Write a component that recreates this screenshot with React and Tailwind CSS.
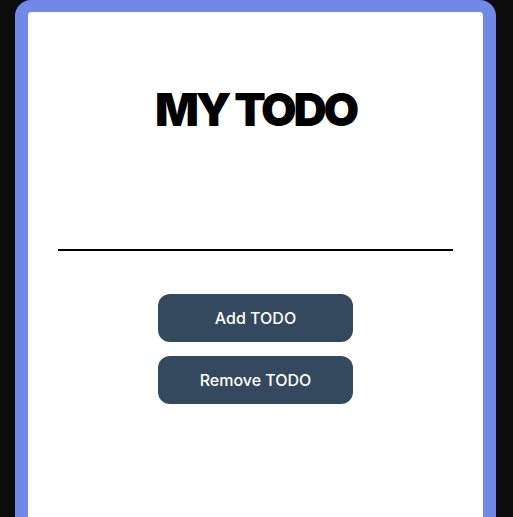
export default function App() {
  return (
    <div className="min-h-[517px] bg-[#0c0c0c] px-[15px] pr-[17px] overflow-hidden" style={{ fontFamily: "Inter, 'Noto Sans', sans-serif" }}>
      <div className="h-[530px] bg-white border-[#7389e8] border-x-[13px] border-t-[12px] rounded-t-[16px] flex flex-col items-center">
        <h1 className="mt-[74px] text-[46px] leading-none font-black text-black tracking-[-3.2px]">MY TODO</h1>
        <input
          type="text"
          className="mt-[80px] w-[395px] h-[39px] border-b-2 border-black outline-none bg-transparent text-base"
        />
        <button className="mt-[43px] w-[195px] h-[48px] rounded-[12px] bg-[#34495e] text-white text-[16px] font-medium">
          Add TODO
        </button>
        <button className="mt-[14px] w-[195px] h-[48px] rounded-[12px] bg-[#34495e] text-white text-[16px] font-medium">
          Remove TODO
        </button>
      </div>
    </div>
  );
}
